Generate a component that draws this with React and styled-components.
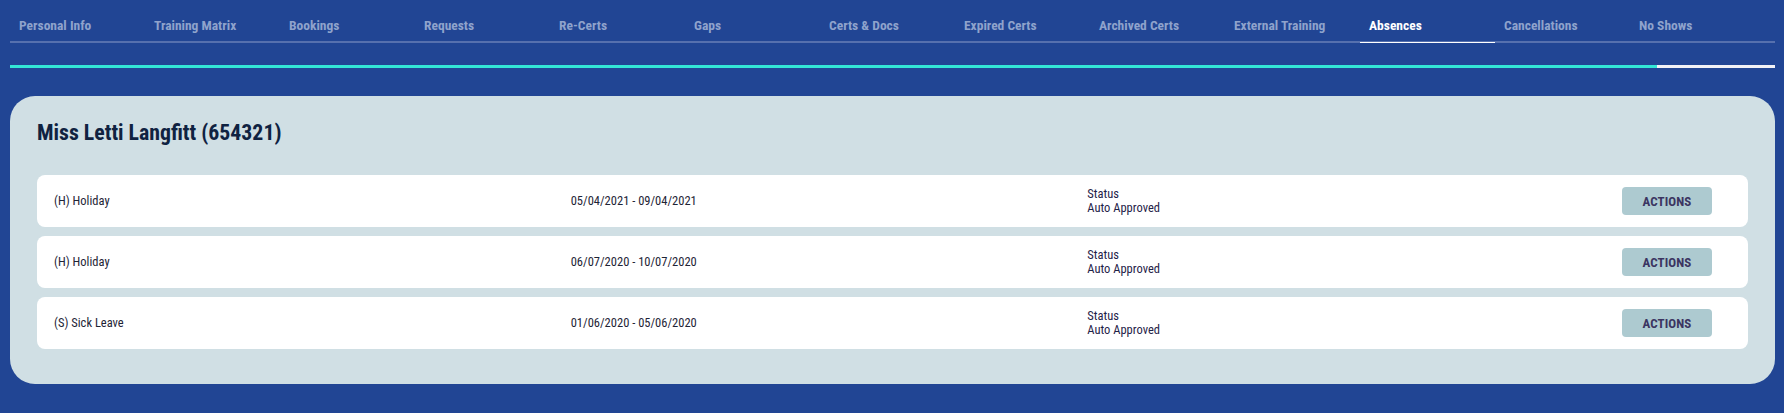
import React from "react";
import styled, { createGlobalStyle } from "styled-components";

const Global = createGlobalStyle`
  html, body {
    margin: 0;
    padding: 0;
    background: #214594;
    font-family: "Roboto Condensed", Roboto, "Liberation Sans", sans-serif;
    font-stretch: condensed;
  }
  * { box-sizing: border-box; }
`;

const Page = styled.div`
  padding: 0 9px 0 10px;
`;

const TabBar = styled.nav`
  display: flex;
  border-bottom: 2px solid #5670ae;
`;

const Tab = styled.div`
  width: 135px;
  flex: 0 0 135px;
  padding: 18px 9px 8px;
  margin-bottom: -2px;
  height: 43px;
  font-size: 13.5px;
  line-height: 15px;
  font-weight: 700;
  white-space: nowrap;
  color: ${(p) => (p.$active ? "#ffffff" : "#8fa3cc")};
  box-shadow: ${(p) => (p.$active ? "inset 0 -1px 0 #ffffff" : "none")};
`;

const Progress = styled.div`
  margin-top: 22px;
  height: 3px;
  background: #f2f2f7;
`;

const ProgressFill = styled.div`
  height: 100%;
  background: #33e6d6;
`;

const Card = styled.section`
  margin-top: 28px;
  background: #d0dfe4;
  border-radius: 25px;
  padding: 24px 27px 35px;
`;

const Title = styled.h1`
  margin: 0 0 29px;
  font-size: 21.8px;
  line-height: 26px;
  font-weight: 700;
  color: #0f2241;
`;

const List = styled.div`
  display: flex;
  flex-direction: column;
  gap: 9px;
`;

const Row = styled.div`
  display: grid;
  grid-template-columns: repeat(3, 1fr) 108px;
  align-items: center;
  height: 52px;
  padding: 0 36px 0 17px;
  background: #ffffff;
  border-radius: 8px;
`;

const Cell = styled.div`
  font-size: 12.5px;
  line-height: 14px;
  color: #1e2436;
`;

const StatusCell = styled(Cell)`
  color: #1f2248;
`;

const ActionButton = styled.button`
  justify-self: end;
  width: 90px;
  height: 28px;
  border: none;
  border-radius: 4px;
  background: #adcad0;
  color: #3b3561;
  font-family: inherit;
  font-stretch: condensed;
  font-size: 13px;
  font-weight: 700;
  letter-spacing: 0.1px;
  cursor: pointer;
`;

const tabs = [
  "Personal Info",
  "Training Matrix",
  "Bookings",
  "Requests",
  "Re-Certs",
  "Gaps",
  "Certs & Docs",
  "Expired Certs",
  "Archived Certs",
  "External Training",
  "Absences",
  "Cancellations",
  "No Shows",
];

const absences = [
  { type: "(H) Holiday", range: "05/04/2021 - 09/04/2021", status: "Auto Approved" },
  { type: "(H) Holiday", range: "06/07/2020 - 10/07/2020", status: "Auto Approved" },
  { type: "(S) Sick Leave", range: "01/06/2020 - 05/06/2020", status: "Auto Approved" },
];

export default function App() {
  const progress = 93.3;
  return (
    <>
      <Global />
      <Page>
        <TabBar>
          {tabs.map((t) => (
            <Tab key={t} $active={t === "Absences"}>
              {t}
            </Tab>
          ))}
        </TabBar>
        <Progress>
          <ProgressFill style={{ width: `${progress}%` }} />
        </Progress>
        <Card>
          <Title>Miss Letti Langfitt (654321)</Title>
          <List>
            {absences.map((a, i) => (
              <Row key={i}>
                <Cell>{a.type}</Cell>
                <Cell>{a.range}</Cell>
                <StatusCell>
                  Status
                  <br />
                  {a.status}
                </StatusCell>
                <ActionButton>ACTIONS</ActionButton>
              </Row>
            ))}
          </List>
        </Card>
      </Page>
    </>
  );
}
